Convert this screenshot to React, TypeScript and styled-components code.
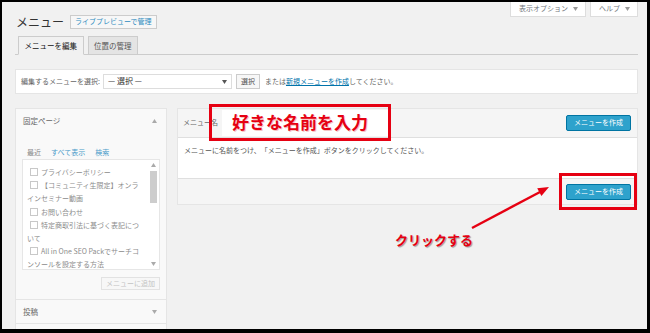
import React from "react";
import styled, { createGlobalStyle } from "styled-components";

const GlobalStyle = createGlobalStyle`
  html, body {
    margin: 0;
    padding: 0;
    background: #000;
  }
  body {
    font-family: "Noto Sans CJK JP", "Noto Sans", sans-serif;
  }
`;

const pages = [
  "プライバシーポリシー",
  "【コミュニティ生限定】オンラインセミナー動画",
  "お問い合わせ",
  "特定商取引法に基づく表記について",
  "All in One SEO Packでサーチコンソールを設定する方法",
];

function Caret({ up, color = "#999" }: { up?: boolean; color?: string }) {
  return (
    <svg width="5" height="4" viewBox="0 0 5 4">
      <path d={up ? "M0 4 L2.5 0 L5 4 Z" : "M0 0 L5 0 L2.5 4 Z"} fill={color} />
    </svg>
  );
}

export default function App() {
  return (
    <>
      <GlobalStyle />
      <Frame>
        <HeaderRow>
          <TitleGroup>
            <Title>メニュー</Title>
            <GhostButton>ライブプレビューで管理</GhostButton>
          </TitleGroup>
          <MetaTabs>
            <MetaTab>
              表示オプション <Caret />
            </MetaTab>
            <MetaTab>
              ヘルプ <Caret />
            </MetaTab>
          </MetaTabs>
        </HeaderRow>

        <TabBar>
          <Tab $active>メニューを編集</Tab>
          <Tab>位置の管理</Tab>
        </TabBar>

        <SelectBar>
          <span>編集するメニューを選択:</span>
          <FakeSelect>
            <span>— 選択 —</span>
            <Caret color="#555" />
          </FakeSelect>
          <SmallButton>選択</SmallButton>
          <span>
            または<Link>新規メニューを作成</Link>してください。
          </span>
        </SelectBar>

        <Columns>
          <SidePanel>
            <SectionTitle>
              固定ページ <Caret up color="#aaa" />
            </SectionTitle>
            <SectionBody>
              <InnerTabs>
                <InnerTab $active>最近</InnerTab>
                <InnerTab>すべて表示</InnerTab>
                <InnerTab>検索</InnerTab>
              </InnerTabs>
              <ListBox>
                <Items>
                  {pages.map((p) => (
                    <Item key={p}>
                      <Check />
                      {p}
                    </Item>
                  ))}
                </Items>
                <Scrollbar>
                  <ScrollArrow>
                    <Caret up color="#aaa" />
                  </ScrollArrow>
                  <Thumb />
                  <ScrollArrow $bottom>
                    <Caret color="#aaa" />
                  </ScrollArrow>
                </Scrollbar>
              </ListBox>
              <AddRow>
                <DisabledButton>メニューに追加</DisabledButton>
              </AddRow>
            </SectionBody>
            <SectionTitle $bordered>
              投稿 <Caret color="#aaa" />
            </SectionTitle>
            <SectionTitle $bordered />
          </SidePanel>

          <MenuPanel>
            <PanelHeader>
              <span>メニュー名</span>
              <NameInput />
              <PrimaryButton>メニューを作成</PrimaryButton>
              <NameCallout>好きな名前を入力</NameCallout>
            </PanelHeader>
            <PanelBody>
              メニューに名前をつけ、「メニューを作成」ボタンをクリックしてください。
            </PanelBody>
            <PanelFooter>
              <PrimaryButton>メニューを作成</PrimaryButton>
              <ButtonCallout />
            </PanelFooter>
          </MenuPanel>
        </Columns>

        <Arrow width="100" height="55" viewBox="0 0 100 55">
          <line x1="10" y1="46" x2="78" y2="10" stroke="#e60012" strokeWidth="2.4" />
          <path d="M87 5 L79.4 14.1 L75.2 6.2 Z" fill="#e60012" />
        </Arrow>
        <ClickNote>クリックする</ClickNote>
      </Frame>
    </>
  );
}

const Frame = styled.div`
  position: relative;
  box-sizing: border-box;
  width: 650px;
  height: 333px;
  border-style: solid;
  border-color: #000;
  border-width: 2px 3px 4px 2px;
  background: #f1f1f1;
  overflow: hidden;
  padding: 0 9px 0 13px;
  font-family: "Noto Sans CJK JP", "Noto Sans", sans-serif;
  font-size: 7px;
  line-height: 1.3;
  color: #666;
  text-spacing-trim: space-all;
`;

const HeaderRow = styled.div`
  display: flex;
  justify-content: space-between;
  align-items: flex-start;
`;

const TitleGroup = styled.div`
  display: flex;
  align-items: center;
  gap: 6px;
  padding: 13px 0 0 1px;
`;

const Title = styled.h1`
  margin: 0;
  font-size: 12px;
  line-height: 14px;
  font-weight: 400;
  color: #333;
`;

const GhostButton = styled.div`
  box-sizing: border-box;
  height: 14px;
  padding: 0 4px;
  display: flex;
  align-items: center;
  border: 1px solid #ccc;
  background: #f7f7f7;
  color: #2e8cc0;
  font-size: 7px;
`;

const MetaTabs = styled.div`
  display: flex;
  gap: 4px;
`;

const MetaTab = styled.div`
  box-sizing: border-box;
  height: 15px;
  padding: 0 7px 0 8px;
  display: flex;
  align-items: center;
  gap: 5px;
  border: 1px solid #ddd;
  border-top: none;
  background: #fff;
  color: #72777c;
  font-size: 7px;
`;

const TabBar = styled.div`
  display: flex;
  gap: 4px;
  margin-top: 7px;
  padding-left: 3px;
  border-bottom: 1px solid #ccc;
`;

const Tab = styled.div<{ $active?: boolean }>`
  box-sizing: border-box;
  height: 19px;
  margin-bottom: -1px;
  padding: 0 5.5px;
  display: flex;
  align-items: center;
  border: 1px solid #ccc;
  border-bottom-color: ${(p) => (p.$active ? "#f1f1f1" : "#ccc")};
  background: ${(p) => (p.$active ? "#f1f1f1" : "#e4e4e4")};
  color: ${(p) => (p.$active ? "#111" : "#555")};
  font-size: 7.5px;
`;

const SelectBar = styled.div`
  box-sizing: border-box;
  height: 25px;
  margin-top: 14px;
  padding: 0 5px;
  display: flex;
  align-items: center;
  background: #fff;
  border: 1px solid #e5e5e5;
  color: #666;
  font-size: 7px;
`;

const FakeSelect = styled.div`
  box-sizing: border-box;
  width: 129px;
  height: 15px;
  margin: 0 4px 0 3px;
  padding: 0 4px;
  display: flex;
  align-items: center;
  justify-content: space-between;
  border: 1px solid #ddd;
  background: #fff;
  color: #333;
  font-size: 8px;
`;

const SmallButton = styled.div`
  box-sizing: border-box;
  height: 15px;
  margin-right: 5px;
  padding: 0 4px;
  display: flex;
  align-items: center;
  border: 1px solid #ccc;
  background: #f7f7f7;
  color: #555;
`;

const Link = styled.a`
  color: #0073aa;
  text-decoration: underline;
`;

const Columns = styled.div`
  display: flex;
  align-items: flex-start;
  gap: 10px;
  margin-top: 14px;
`;

const SidePanel = styled.div`
  box-sizing: border-box;
  width: 152px;
  border: 1px solid #e5e5e5;
  background: #f9f9f9;
`;

const SectionTitle = styled.div<{ $bordered?: boolean }>`
  box-sizing: border-box;
  height: 24px;
  padding: 0 9px 0 7px;
  display: flex;
  align-items: center;
  justify-content: space-between;
  border-top: ${(p) => (p.$bordered ? "1px solid #e5e5e5" : "none")};
  color: #666;
  font-size: 7.5px;
`;

const SectionBody = styled.div`
  padding: 14px 6px 9px 6px;
`;

const InnerTabs = styled.div`
  display: flex;
  gap: 10px;
  height: 12px;
  align-items: center;
  padding-left: 5px;
`;

const InnerTab = styled.span<{ $active?: boolean }>`
  color: ${(p) => (p.$active ? "#888" : "#4a9bc9")};
`;

const ListBox = styled.div`
  box-sizing: border-box;
  height: 111px;
  display: flex;
  border: 1px solid #e6e6e6;
  background: #fff;
  overflow: hidden;
`;

const Items = styled.div`
  flex: 1;
  padding: 6px 9px 0 4px;
`;

const Item = styled.div`
  line-height: 13.2px;
  color: #8c8c8c;
`;

const Check = styled.span`
  display: inline-block;
  box-sizing: border-box;
  width: 8px;
  height: 8px;
  margin: 0 3px 0 3px;
  vertical-align: -1px;
  border: 1px solid #c8c8c8;
  background: #fff;
`;

const Scrollbar = styled.div`
  width: 7px;
  margin: 1px 2px 1px 0;
  display: flex;
  flex-direction: column;
`;

const ScrollArrow = styled.div<{ $bottom?: boolean }>`
  height: 8px;
  margin-top: ${(p) => (p.$bottom ? "auto" : "0")};
  display: flex;
  align-items: center;
  justify-content: center;
`;

const Thumb = styled.div`
  height: 32px;
  margin-top: 2px;
  background: #cdcdcd;
`;

const AddRow = styled.div`
  display: flex;
  justify-content: flex-end;
  margin-top: 7px;
`;

const DisabledButton = styled.div`
  box-sizing: border-box;
  height: 13px;
  padding: 0 4px;
  display: flex;
  align-items: center;
  border: 1px solid #e2e2e2;
  background: #f7f7f7;
  color: #c3c3c3;
`;

const MenuPanel = styled.div`
  flex: 1;
  box-sizing: border-box;
  border: 1px solid #e5e5e5;
  background: #fff;
`;

const PanelHeader = styled.div`
  position: relative;
  box-sizing: border-box;
  height: 29px;
  padding: 0 6px 0 5px;
  display: flex;
  align-items: center;
  background: #f5f5f5;
  border-bottom: 1px solid #dfdfdf;
  color: #666;
`;

const NameInput = styled.div`
  box-sizing: border-box;
  width: 166px;
  height: 26px;
  margin-left: 4px;
  border: 1px solid #fff;
  background: #fff;
`;

const PrimaryButton = styled.div`
  box-sizing: border-box;
  height: 16px;
  margin-left: auto;
  padding: 0 7px;
  display: flex;
  align-items: center;
  border: 1px solid #0074a2;
  border-radius: 2px;
  background: #2ea2cc;
  color: #fff;
  font-size: 7px;
`;

const PanelBody = styled.div`
  box-sizing: border-box;
  height: 40px;
  padding: 7px 6px;
  line-height: 10px;
  color: #555;
`;

const PanelFooter = styled.div`
  position: relative;
  box-sizing: border-box;
  height: 26px;
  padding: 0 6px;
  display: flex;
  align-items: center;
  background: #f5f5f5;
  border-top: 1px solid #dfdfdf;
`;

const NameCallout = styled.div`
  position: absolute;
  left: 31px;
  top: -5px;
  z-index: 2;
  box-sizing: border-box;
  width: 182px;
  height: 37px;
  display: flex;
  align-items: center;
  justify-content: center;
  border: 3px solid #e60012;
  color: #e60012;
  font-size: 17px;
  font-weight: 700;
  text-shadow: 1px 1px 0 #f4c4c4;
`;

const ButtonCallout = styled.div`
  position: absolute;
  right: 0;
  top: -6px;
  z-index: 2;
  box-sizing: border-box;
  width: 78px;
  height: 37px;
  border: 3px solid #e60012;
`;

const Arrow = styled.svg`
  position: absolute;
  left: 460px;
  top: 180px;
  z-index: 3;
`;

const ClickNote = styled.div`
  position: absolute;
  left: 393px;
  top: 230px;
  z-index: 3;
  font-size: 13px;
  line-height: 16px;
  font-weight: 700;
  color: #e60012;
  text-shadow: 1px 1px 1px rgba(0, 0, 0, 0.35);
`;
